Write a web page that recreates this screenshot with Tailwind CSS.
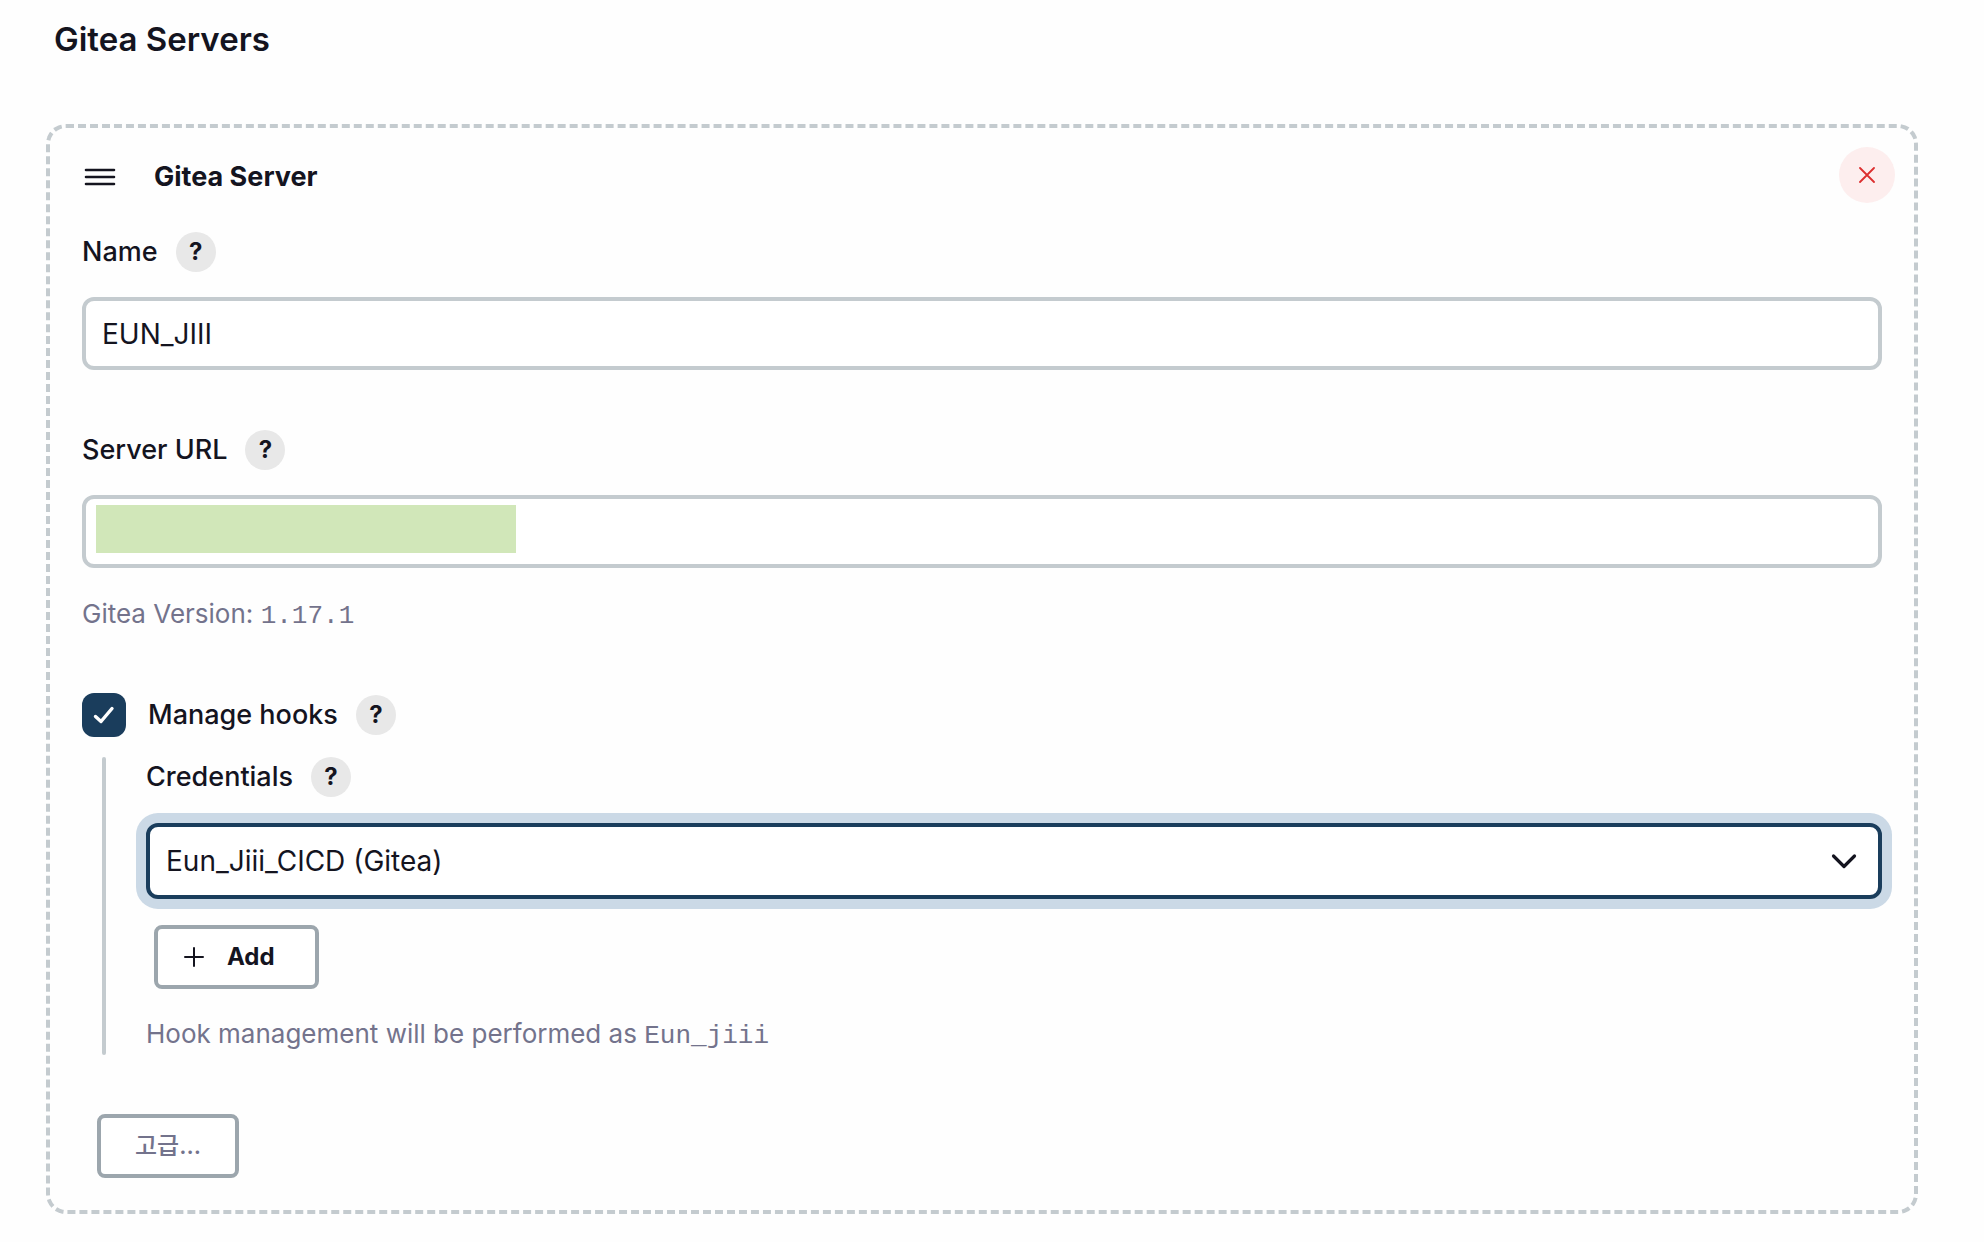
<!DOCTYPE html>
<html lang="ko">

<head>
    <meta charset="UTF-8">
    <meta name="viewport" content="width=device-width, initial-scale=1.0">
    <title>Gitea Servers</title>
    <script src="https://cdn.jsdelivr.net/npm/@tailwindcss/browser@4"></script>
</head>

<body class="bg-[#fefefe] min-h-screen pl-[46px] pr-[66px] pb-7 font-['Inter','Noto_Sans_CJK_KR',sans-serif] text-[27px] leading-[42px] text-[#14141f]">
    <h1 class="pt-[15px] pl-2 mb-[61px] text-[33px] leading-[48px] font-semibold">Gitea Servers</h1>

    <form class="border-4 border-dashed border-[#c4cbcf] rounded-[20px] px-8 pt-[19px] pb-8">
        <!-- Header -->
        <div class="flex items-center h-14 mb-[29px] -mr-[13px]">
            <div class="flex flex-1 items-center mt-1">
                <svg class="w-9 h-9 shrink-0" viewBox="0 0 36 36" fill="none" stroke="currentColor" stroke-width="2.6" stroke-linecap="round">
                    <path d="M4 11h28M4 18h28M4 25h28" />
                </svg>
                <h2 class="ml-9 font-bold">Gitea Server</h2>
            </div>
            <button type="button" aria-label="Delete" class="flex items-center justify-center w-14 h-14 rounded-full bg-[#fdeeee] text-[#dc2f2f]">
                <svg class="w-4 h-4" viewBox="0 0 16 16" fill="none" stroke="currentColor" stroke-width="1.8" stroke-linecap="round">
                    <path d="M1 1l14 14M15 1L1 15" />
                </svg>
            </button>
        </div>

        <!-- Name -->
        <div class="mb-[60px]">
            <div class="flex items-center gap-[18px] h-10 mb-[25px]">
                <label for="name" class="font-medium">Name</label>
                <button type="button" aria-label="Help for Name" class="w-10 h-10 rounded-full bg-[#e8e8e8] text-[24px] leading-10 font-bold">?</button>
            </div>
            <input id="name" type="text" value="EUN_JIII" class="block w-full h-[73px] px-4 border-4 border-[#c4cbcf] rounded-xl bg-white text-[28px] outline-none">
        </div>

        <!-- Server URL -->
        <div class="mb-[58px]">
            <div class="flex items-center gap-[18px] h-10 mb-[25px]">
                <label for="url" class="font-medium">Server URL</label>
                <button type="button" aria-label="Help for Server URL" class="w-10 h-10 rounded-full bg-[#e8e8e8] text-[24px] leading-10 font-bold">?</button>
            </div>
            <div class="relative mb-[25px]">
                <input id="url" type="text" class="block w-full h-[73px] px-4 border-4 border-[#c4cbcf] rounded-xl bg-white text-[28px] outline-none">
                <div class="absolute left-[14px] top-[10px] w-[420px] h-12 bg-[#d1e7b9]"></div>
            </div>
            <p class="text-[26px] leading-[42px] text-[#73738c]">Gitea Version: <code class="font-['Liberation_Mono',monospace] text-[26px] leading-none">1.17.1</code></p>
        </div>

        <!-- Manage hooks -->
        <div class="flex items-center gap-[18px] h-11">
            <div class="relative w-11 h-11 mr-1">
                <input id="hooks" type="checkbox" checked class="block appearance-none w-11 h-11 rounded-xl bg-[#1a3d5c]">
                <svg class="absolute inset-0 w-11 h-11 pointer-events-none" viewBox="0 0 44 44" fill="none" stroke="white" stroke-width="3.4" stroke-linecap="round" stroke-linejoin="round">
                    <path d="M13.5 23.5l5.5 5L30 15.5" />
                </svg>
            </div>
            <label for="hooks" class="font-medium">Manage hooks</label>
            <button type="button" aria-label="Help for Manage hooks" class="w-10 h-10 rounded-full bg-[#e8e8e8] text-[24px] leading-10 font-bold">?</button>
        </div>

        <div class="flex mt-5 ml-5 mb-[59px]">
            <div class="w-1 mr-10 rounded-full bg-[#c4cbcf]"></div>
            <div class="flex-1">
                <div class="flex items-center gap-[18px] h-10 mb-[26px]">
                    <label for="credentials" class="font-medium">Credentials</label>
                    <button type="button" aria-label="Help for Credentials" class="w-10 h-10 rounded-full bg-[#e8e8e8] text-[24px] leading-10 font-bold">?</button>
                </div>
                <div class="relative mb-[26px]">
                    <select id="credentials" class="block appearance-none w-full h-[76px] px-4 border-4 border-[#1a3d5c] rounded-xl bg-white text-[28px] outline-none ring-[10px] ring-[#cbd9e6]">
                        <option>Eun_Jiii_CICD (Gitea)</option>
                    </select>
                    <svg class="absolute right-6 top-6 w-7 h-7 pointer-events-none" viewBox="0 0 28 28" fill="none" stroke="currentColor" stroke-width="3.2" stroke-linecap="round" stroke-linejoin="round">
                        <path d="M3.5 9L14 19.5L24.5 9" />
                    </svg>
                </div>
                <button type="button" class="flex items-center ml-2 mb-6 h-16 pl-[26px] pr-10 gap-[23px] border-4 border-[#9ca6ad] rounded-lg bg-white text-[24px] font-bold">
                    <svg class="w-5 h-5" viewBox="0 0 20 20" fill="none" stroke="currentColor" stroke-width="2" stroke-linecap="round">
                        <path d="M10 1v18M1 10h18" />
                    </svg>
                    Add
                </button>
                <p class="text-[26px] leading-[42px] text-[#73738c]">Hook management will be performed as <code class="font-['Liberation_Mono',monospace] text-[26px] leading-none">Eun_jiii</code></p>
            </div>
        </div>

        <button type="button" class="block ml-[15px] h-16 px-[34px] border-4 border-[#9ca6ad] rounded-lg bg-white text-[24px] leading-[56px] font-medium text-[#73738c]">고급...</button>
    </form>
</body>

</html>
